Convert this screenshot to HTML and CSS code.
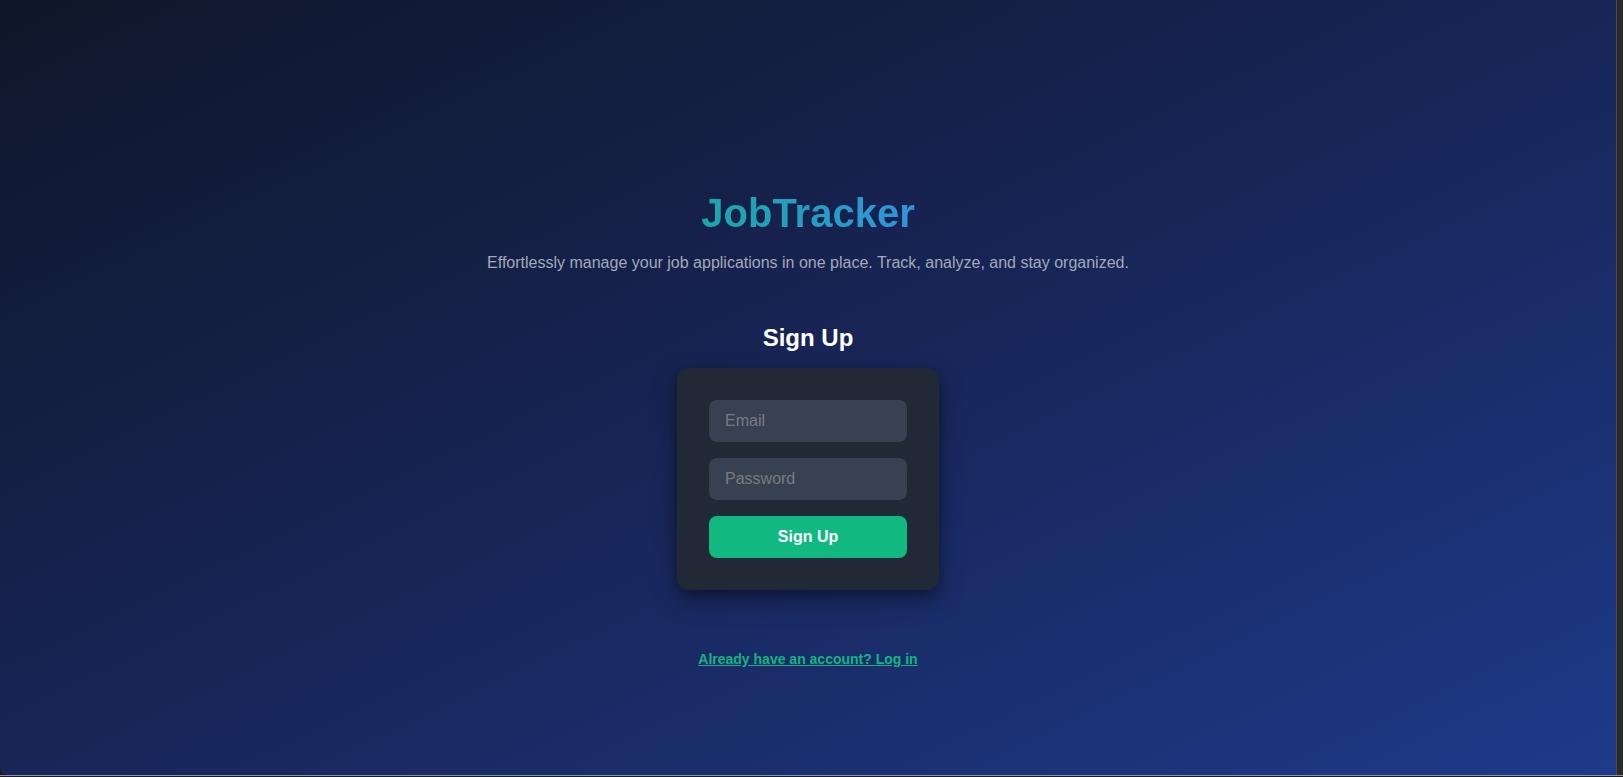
FILE: index.html
```html
<!DOCTYPE html>
<html lang="en">
<head>
<meta charset="utf-8">
<title>JobTracker</title>
<link rel="stylesheet" href="styles.css">
</head>
<body>
<div class="frame">
  <main class="app">
    <h1 class="title"><span class="title-text">JobTracker</span></h1>
    <p class="subtitle">Effortlessly manage your job applications in one place. Track, analyze, and stay organized.</p>
    <h2 class="form-title">Sign Up</h2>
    <form class="card">
      <input class="field" type="email" placeholder="Email">
      <input class="field" type="password" placeholder="Password">
      <button class="btn" type="button">Sign Up</button>
    </form>
    <a class="switch-link" href="#">Already have an account? Log in</a>
  </main>
  <div class="edge-right"></div>
</div>
<div class="edge-bottom"></div>
</body>
</html>
```

FILE: styles.css
```css
* { box-sizing: border-box; }
html, body { margin: 0; padding: 0; }
body {
  background: #1b1b1b;
  font-family: "Liberation Sans", Arial, Helvetica, sans-serif;
  width: 1623px;
  height: 777px;
  overflow: hidden;
}
.frame {
  display: flex;
  height: 775px;
}
.app {
  flex: 1;
  height: 775px;
  background: linear-gradient(to bottom right, #0f1729 0%, #172352 45%, #1e3a8a 100%);
  border-bottom-left-radius: 8px;
  display: flex;
  flex-direction: column;
  align-items: center;
  padding-top: 193px;
}
.edge-right {
  width: 7px;
  background: #2a2a2a;
  border-left: 1px solid #4a4a4a;
}
.edge-bottom {
  height: 2px;
  border-top: 1px solid #8b93a6;
  background: #1b1b1b;
}
.title {
  margin: 0;
  font-size: 40px;
  line-height: 40px;
  font-weight: 700;
}
.title-text {
  background: linear-gradient(to right, #1aa8a8, #3193db);
  -webkit-background-clip: text;
  background-clip: text;
  color: transparent;
}
.subtitle {
  margin: 18px 0 0;
  font-size: 16px;
  line-height: 24px;
  color: #a3aab8;
}
.form-title {
  margin: 47px 0 0;
  font-size: 24px;
  line-height: 32px;
  font-weight: 700;
  color: #ffffff;
}
.card {
  margin: 14px 0 0;
  width: 262px;
  padding: 32px;
  background: #212937;
  border-radius: 12px;
  box-shadow: 0 10px 25px rgba(0, 0, 0, 0.35), 0 4px 10px rgba(0, 0, 0, 0.2);
  display: flex;
  flex-direction: column;
  gap: 16px;
}
.field {
  display: block;
  width: 100%;
  height: 42px;
  border: none;
  outline: none;
  border-radius: 8px;
  background: #374151;
  padding: 0 16px;
  font-family: inherit;
  font-size: 16px;
  color: #ffffff;
}
.field::placeholder { color: #797b82; }
.btn {
  display: block;
  width: 100%;
  height: 42px;
  border: none;
  border-radius: 8px;
  background: #11b981;
  color: #ffffff;
  font-family: inherit;
  font-size: 16px;
  font-weight: 700;
}
.switch-link {
  margin-top: 59px;
  font-size: 14px;
  line-height: 20px;
  font-weight: 700;
  color: #12b582;
  text-decoration: underline;
}
```
